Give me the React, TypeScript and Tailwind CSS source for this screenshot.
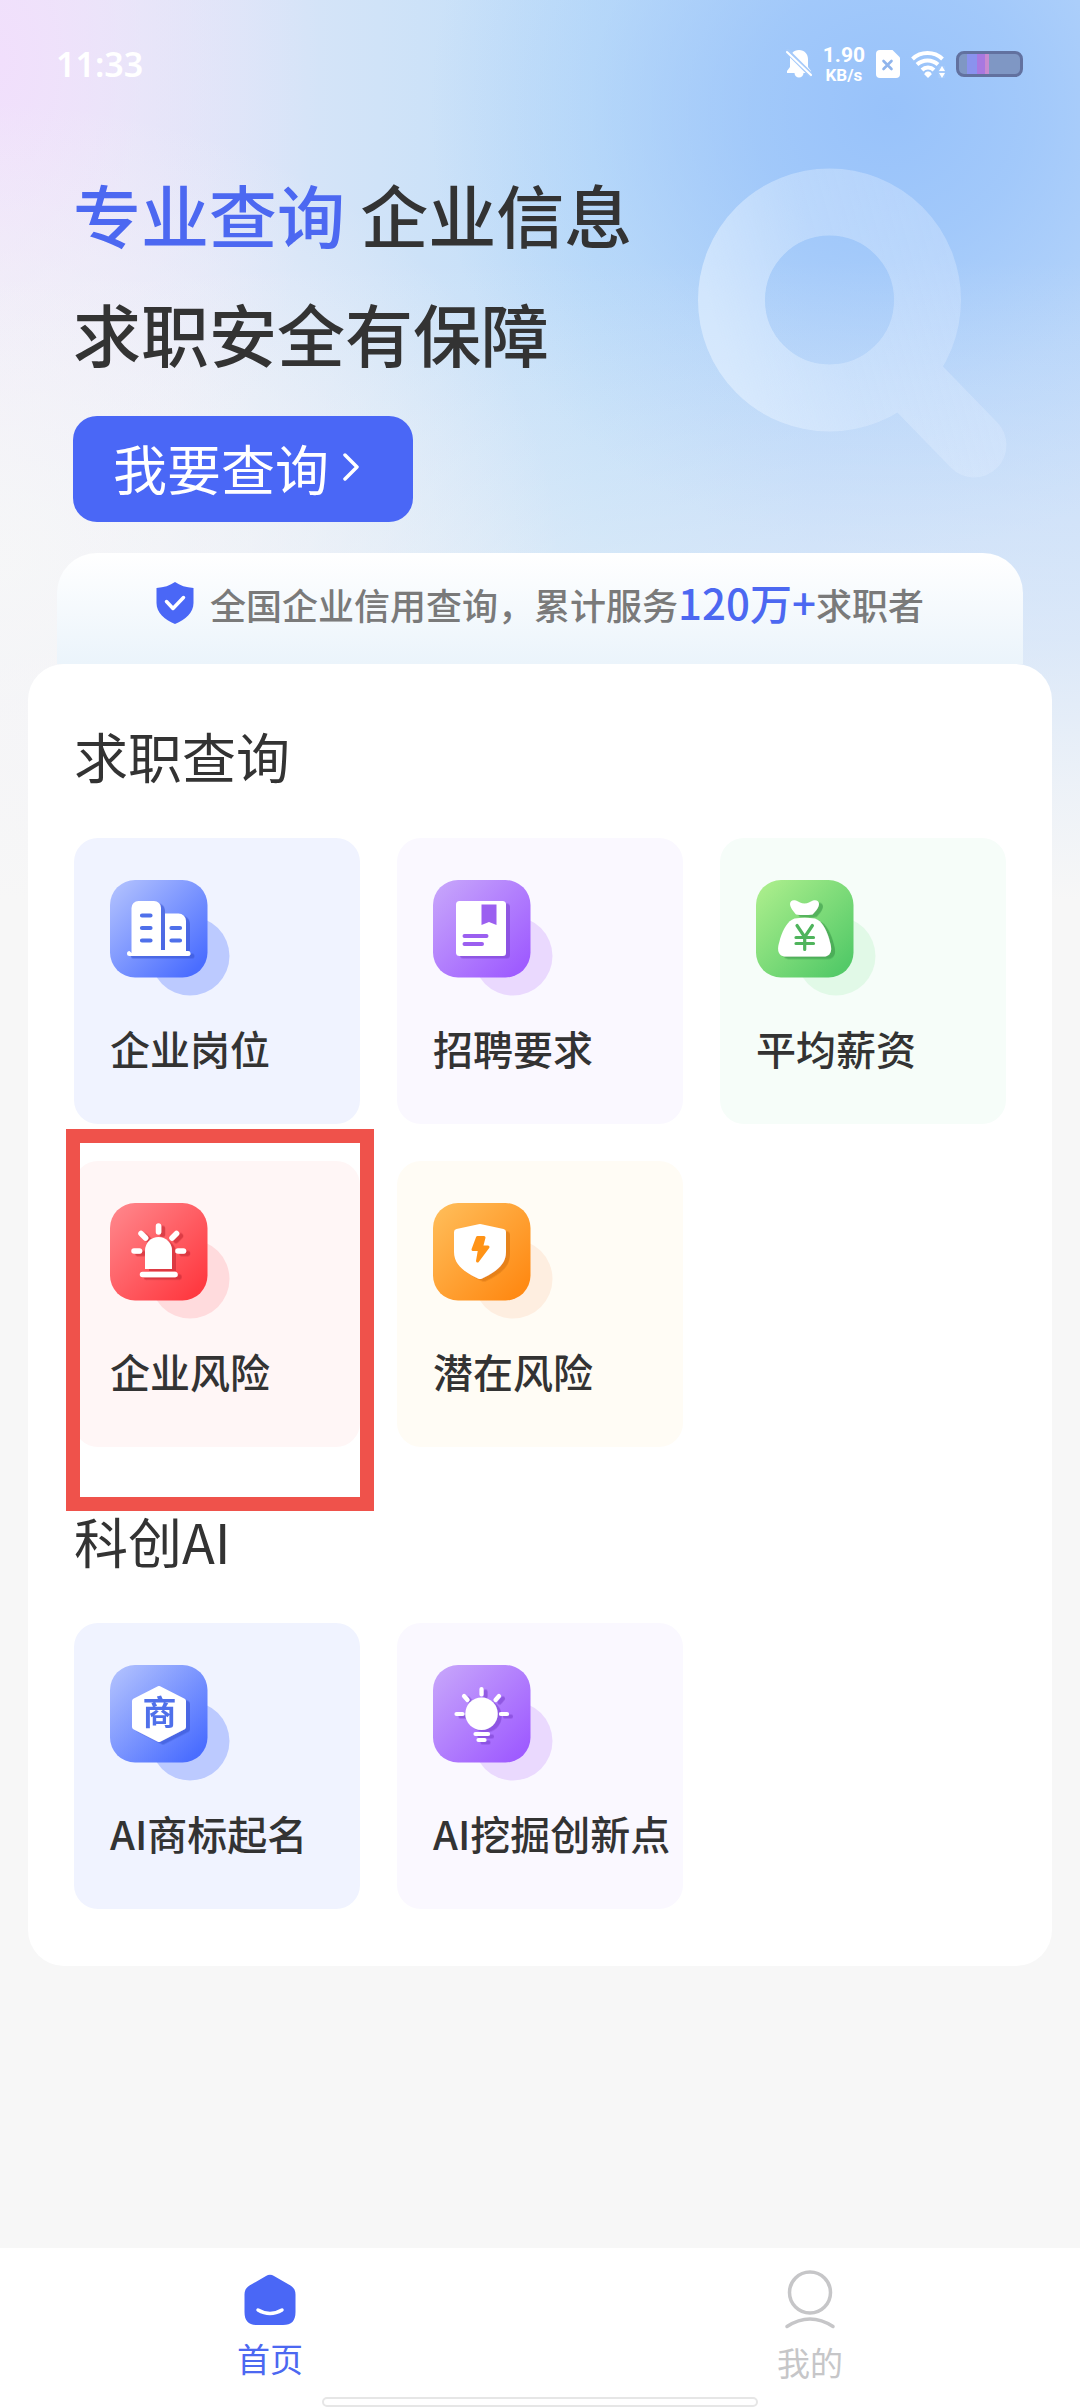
import React, { useId } from "react";

type Tone = "blue" | "purple" | "green" | "red" | "orange";

const tones: Record<Tone, { from: string; to: string; dot: string; ink: string; shade: string; card: string }> = {
  blue: { from: "#b0c0fe", to: "#4a6dff", dot: "#bccaff", ink: "#4f70ea", shade: "#3b58d6", card: "bg-[#f0f3ff]" },
  purple: { from: "#c6a4fb", to: "#9f5cff", dot: "#ead9fe", ink: "#9b5ff0", shade: "#7f45d4", card: "bg-[#faf8ff]" },
  green: { from: "#abee8c", to: "#54ca68", dot: "#e1f9e7", ink: "#4fb45c", shade: "#3c9c4b", card: "bg-[#f6fdf9]" },
  red: { from: "#ff858a", to: "#ff3a41", dot: "#ffdbdd", ink: "#ff444b", shade: "#c92a35", card: "bg-[#fff6f6]" },
  orange: { from: "#ffbc58", to: "#ff8a14", dot: "#feeee0", ink: "#ff9317", shade: "#d9760c", card: "bg-[#fffcf5]" },
};

function Tile({ tone, children }: { tone: Tone; children: (ink: string) => React.ReactNode }) {
  const id = useId();
  const t = tones[tone];
  return (
    <svg width="120" height="116" viewBox="0 0 120 116" aria-hidden="true" className="shrink-0">
      <defs>
        <linearGradient id={`${id}g`} x1="0" y1="0" x2="1" y2="1">
          <stop offset="0.05" stopColor={t.from} />
          <stop offset="0.9" stopColor={t.to} />
        </linearGradient>
        <filter id={`${id}s`} x="-20%" y="-20%" width="150%" height="150%">
          <feDropShadow dx="4" dy="2.5" stdDeviation="0.6" floodColor={t.shade} floodOpacity="0.65" />
        </filter>
      </defs>
      <circle cx="80" cy="76" r="39.5" fill={t.dot} />
      <rect width="97.5" height="97.5" rx="25" fill={`url(#${id}g)`} />
      <g filter={`url(#${id}s)`}>{children(t.ink)}</g>
    </svg>
  );
}

const BuildingsIcon = () => (
  <Tile tone="blue">
    {(ink) => (
      <>
        <path
          fill="#fff"
          d="M21.500 73V28a7 7 0 0 1 7-7H44a7 7 0 0 1 7 7v42h4V33.500h13.500a7.500 7.500 0 0 1 7.500 7.500v30h2a2.300 2.300 0 0 1 0 5H19.500a2.300 2.300 0 0 1 0-5z"
        />
        <path d="M32 35.500h8.500M32 48h8.500M32 60.500h8.500M61.500 48H70M61.500 60.500H70" stroke={ink} strokeWidth="4.200" strokeLinecap="round" />
      </>
    )}
  </Tile>
);

const DocumentIcon = () => (
  <Tile tone="purple">
    {(ink) => (
      <>
        <rect x="23" y="21" width="50" height="55" rx="3.500" fill="#fff" />
        <path d="M48.500 24.500h15V45l-7.500-3-7.500 3z" fill={ink} />
        <path d="M31.500 56H53.500M31.500 64H49" stroke={ink} strokeWidth="4" strokeLinecap="round" />
      </>
    )}
  </Tile>
);

const MoneyBagIcon = () => (
  <Tile tone="green">
    {(ink) => (
      <>
        <path
          fill="#fff"
          d="M40 34.500c-2-2.500-6-7-6-10.500s3-4.500 6-3.500 5 3 8.500 3 5.500-2 8.500-3 6 0 6 3.500-4 8-6.500 10.500q-8.500 1.200-16.500 0z"
        />
        <path
          fill="#fff"
          d="M38.500 38.500q10-1.500 20.500 0c7 2.500 11 10.500 14 20l1.700 6.500c1.500 7-1 11.500-7.200 11.500H30c-6.500 0-9-4.500-7.500-11.500l1.700-6.500c3-9.500 7.300-17.500 14.300-20z"
        />
        <path
          d="M41 45.500l7.700 11.500 7.700-11.500M40 57.500h17.500M40 63.500h17.500M48.700 57v12.500"
          stroke={ink}
          strokeWidth="3.200"
          strokeLinecap="round"
          strokeLinejoin="round"
          fill="none"
        />
      </>
    )}
  </Tile>
);

const AlarmIcon = () => (
  <Tile tone="red">
    {() => (
      <>
        <path d="M35 66V47.500a13.500 13.500 0 0 1 27 0V66z" fill="#fff" />
        <path
          d="M32.500 71.500H65M48.500 23v6M24 48h5.500M68 48h5.500M31 30.500l4.500 4.500M66.500 30.500L62 35"
          stroke="#fff"
          strokeWidth="5.500"
          strokeLinecap="round"
        />
      </>
    )}
  </Tile>
);

const BoltShieldIcon = () => (
  <Tile tone="orange">
    {(ink) => (
      <>
        <path
          fill="#fff"
          d="M45.500 21.300q1.500-.6 3 0l22 4.700q2.500.5 2.500 3v20c0 13-11 20.500-24 26.500q-2 1-4 0c-13-6-24-13.500-24-26.500V29q0-2.500 2.500-3z"
        />
        <path
          d="M44.500 34.500h6.500l-2.500 9.500h6.500L44.500 58l2-11.500h-6.500z"
          fill={ink}
          stroke={ink}
          strokeWidth="3"
          strokeLinejoin="round"
        />
      </>
    )}
  </Tile>
);

const TrademarkIcon = () => (
  <Tile tone="blue">
    {(ink) => (
      <>
        <path
          d="M49 23.500L73.500 36v26L49 74.500 24.500 62V36z"
          fill="#fff"
          stroke="#fff"
          strokeWidth="5"
          strokeLinejoin="round"
        />
        <text x="49.500" y="60" textAnchor="middle" fontSize="34" fill={ink} className="font-bold">
          商
        </text>
      </>
    )}
  </Tile>
);

const BulbIcon = () => (
  <Tile tone="purple">
    {() => (
      <>
        <circle cx="48.500" cy="48.700" r="16.200" fill="#fff" />
        <path
          d="M48.500 24v5.500M23.500 49h6M68 49h6M31 31l3.500 4M66 31l-3.500 4M42.500 69H55M45.500 75h6"
          stroke="#fff"
          strokeWidth="4.200"
          strokeLinecap="round"
        />
      </>
    )}
  </Tile>
);

interface Entry {
  label: string;
  tone: Tone;
  Icon: React.FC;
  marked?: boolean;
}

const jobEntries: Entry[] = [
  { label: "企业岗位", tone: "blue", Icon: BuildingsIcon },
  { label: "招聘要求", tone: "purple", Icon: DocumentIcon },
  { label: "平均薪资", tone: "green", Icon: MoneyBagIcon },
  { label: "企业风险", tone: "red", Icon: AlarmIcon, marked: true },
  { label: "潜在风险", tone: "orange", Icon: BoltShieldIcon },
];

const aiEntries: Entry[] = [
  { label: "AI商标起名", tone: "blue", Icon: TrademarkIcon },
  { label: "AI挖掘创新点", tone: "purple", Icon: BulbIcon },
];

function EntryGrid({ entries }: { entries: Entry[] }) {
  return (
    <div className="mt-[42px] grid grid-cols-3 gap-[37px]">
      {entries.map(({ label, tone, Icon, marked }) => (
        <div key={label} className="relative">
          <button
            type="button"
            className={`flex aspect-square w-full flex-col items-start rounded-3xl pt-[42px] pl-9 text-left ${tones[tone].card}`}
          >
            <Icon />
            <span className="mt-[22px] text-[40px] leading-[60px] font-medium whitespace-nowrap">{label}</span>
          </button>
          {marked && (
            <div className="pointer-events-none absolute -top-8 -right-3.5 -bottom-16 -left-2 border-[14px] border-[#ef524b]" />
          )}
        </div>
      ))}
    </div>
  );
}

function StatusBar() {
  return (
    <div className="flex h-32 items-center justify-between pr-[57px] pl-14 text-white">
      <time className="font-['Noto_Sans',sans-serif] text-[34px] font-semibold">11:33</time>
      <div className="flex items-center gap-[11px]">
        <svg width="26" height="30" viewBox="0 0 26 30" aria-hidden="true">
          <path
            fill="currentColor"
            d="M13 1c5.500 0 9 4 9 9v8l3 4v2H17.500a4.500 4.500 0 0 1-9 0H1v-2l3-4v-8c0-5 3.500-9 9-9z"
          />
          <path d="M0 1l26 26" stroke="#a5cafa" strokeWidth="5" />
          <path d="M1 3l24 23" stroke="currentColor" strokeWidth="2" strokeLinecap="round" />
        </svg>
        <div className="flex flex-col items-center font-[Roboto,sans-serif] font-bold">
          <span className="text-[21px] leading-[22px]">1.90</span>
          <span className="text-[17px] leading-[18px]">KB/s</span>
        </div>
        <svg width="24" height="28" viewBox="0 0 24 28" aria-hidden="true">
          <path fill="currentColor" d="M4 0h12.500L24 7.500V24a4 4 0 0 1-4 4H4a4 4 0 0 1-4-4V4a4 4 0 0 1 4-4z" />
          <path d="M7.500 11l8 8M15.500 11l-8 8" stroke="#8fb4ec" strokeWidth="2.600" strokeLinecap="round" />
        </svg>
        <svg width="34" height="28" viewBox="0 0 34 28" aria-hidden="true" fill="none">
          <path d="M1.500 9a22 22 0 0 1 30 0M6 14.500a15.500 15.500 0 0 1 21 0M11 20a8.500 8.500 0 0 1 12 0" stroke="currentColor" strokeWidth="4" />
          <path fill="currentColor" d="M17 21.500c2 0 4 1.500 3.500 3L17 28l-3.500-3.500c-.5-1.500 1.500-3 3.500-3z" />
          <path d="M31 16v12" stroke="#a5cafa" strokeWidth="7" />
          <path fill="currentColor" d="M31 16l3 5h-6zM31 28l3-5h-6z" />
        </svg>
        <div className="flex h-[26px] w-[67px] items-stretch rounded-lg border-[3px] border-[#62719f] bg-[#7f97c4]">
          <span className="ml-2 w-2.5 bg-[#8a92ee]" />
          <span className="w-2 bg-[#a878e0]" />
          <span className="w-1 bg-[#c88ad0]" />
        </div>
      </div>
    </div>
  );
}

function Magnifier() {
  return (
    <svg
      width="312"
      height="312"
      viewBox="697 168 312 312"
      aria-hidden="true"
      className="absolute top-[168px] right-[71px]"
    >
      <defs>
        <linearGradient id="lens" gradientUnits="userSpaceOnUse" x1="720" y1="340" x2="1000" y2="260">
          <stop offset="0" stopColor="#e6f2ff" stopOpacity="0.6" />
          <stop offset="0.4" stopColor="#e0eeff" stopOpacity="0.42" />
          <stop offset="1" stopColor="#e0ecff" stopOpacity="0.34" />
        </linearGradient>
        <mask id="lens-shape" maskUnits="userSpaceOnUse" x="690" y="160" width="330" height="330">
          <circle cx="829.500" cy="300" r="98" fill="none" stroke="#fff" strokeWidth="67" />
          <path d="M910 379l64 66" stroke="#fff" strokeWidth="65" strokeLinecap="round" />
          <circle cx="829.500" cy="300" r="64" fill="#000" />
        </mask>
      </defs>
      <rect x="690" y="160" width="330" height="330" fill="url(#lens)" mask="url(#lens-shape)" />
    </svg>
  );
}

export default function App() {
  return (
    <div
      lang="zh-CN"
      className="flex min-h-screen flex-col bg-[#f7f7f7] bg-[linear-gradient(180deg,rgba(247,247,247,0)_260px,rgba(247,247,247,0.28)_480px,rgba(247,247,247,0.5)_640px,rgba(247,247,247,0.8)_780px,#f7f7f7_900px),radial-gradient(ellipse_460px_440px_at_890px_110px,rgba(150,193,250,0.95)_0%,rgba(152,195,250,0.75)_30%,rgba(160,201,250,0.35)_65%,rgba(180,212,250,0)_100%),radial-gradient(ellipse_560px_460px_at_0px_560px,#f5f6f8_0%,rgba(245,246,248,0.6)_45%,rgba(240,245,248,0)_100%),radial-gradient(ellipse_320px_560px_at_0px_60px,#f1dffc_0%,rgba(240,228,250,0.5)_45%,rgba(238,232,250,0)_100%),linear-gradient(90deg,#ebe8f8_0%,#d0e3f8_35%,#c0def9_55%,#bcd8fa_75%,#bfd9fa_100%)] font-['Noto_Sans_CJK_SC',sans-serif] text-[#333]"
    >
      <header className="relative">
        <StatusBar />
        <Magnifier />
        <div className="px-[73px] pt-[26px]">
          <h1 className="text-[68px] leading-[119px] font-medium">
            <span className="text-[#4c68f1]">专业查询</span> 企业信息
            <br />
            求职安全有保障
          </h1>
          <button
            type="button"
            className="mt-6 flex h-[106px] items-center gap-3.5 rounded-3xl bg-[#4a67f6] pr-[54px] pb-1 pl-10 text-[54px] text-white"
          >
            我要查询
            <svg width="16" height="28" viewBox="0 0 16 28" fill="none" aria-hidden="true">
              <path d="M2 2l12 12L2 26" stroke="currentColor" strokeWidth="3.500" strokeLinecap="round" strokeLinejoin="round" />
            </svg>
          </button>
        </div>
        <p className="mx-[57px] mt-[31px] flex h-[111px] items-center justify-center rounded-t-[40px] bg-linear-to-b from-white to-[#ebf4fb] pb-3 text-[36px] font-medium text-[#7a7a7a]">
          <svg width="38" height="42" viewBox="0 0 38 42" className="mr-4" aria-hidden="true">
            <path fill="#4a67f6" d="M19 0c5 3.500 11 5.500 18.500 6v15c0 10-8 16.500-18.500 21C8.500 37.500.500 31 .500 21V6C8 5.500 14 3.500 19 0z" />
            <path d="M10.500 19.500l6.500 7 10.500-11" stroke="#fff" strokeWidth="3.500" fill="none" strokeLinecap="round" strokeLinejoin="round" />
          </svg>
          <span className="leading-[60px] whitespace-nowrap">
            全国企业信用查询，累计服务
            <strong className="text-[42px] font-medium text-[#4c68f1]">120万+</strong>
            求职者
          </span>
        </p>
      </header>

      <main className="mx-7 rounded-[36px] bg-white px-[46px] pt-[52px] pb-[57px]">
        <section>
          <h2 className="text-[54px] leading-20">求职查询</h2>
          <EntryGrid entries={jobEntries} />
        </section>
        <section className="mt-[54px]">
          <h2 className="text-[54px] leading-20">科创AI</h2>
          <EntryGrid entries={aiEntries} />
        </section>
      </main>

      <nav className="relative mt-auto grid h-40 grid-cols-2 bg-white text-[33px] leading-10">
        <a href="#home" className="flex flex-col items-center gap-3 pt-[26px] text-[#4c68f1]">
          <svg width="52" height="52" viewBox="0 0 52 52" aria-hidden="true">
            <path
              fill="#4a67f6"
              d="M22 2q4-2.500 8 0l16.500 9.500q5 3 5 9V38c0 9-4 13-12.500 13H13C4.500 51 .500 47 .500 38V20.500q0-6 5-9z"
            />
            <path d="M14 36q12 7 24 0" stroke="#fff" strokeWidth="3.500" fill="none" strokeLinecap="round" />
          </svg>
          首页
        </a>
        <a href="#me" className="flex flex-col items-center gap-3 pt-[22px] text-[#c6c6c8]">
          <svg width="52" height="60" viewBox="0 0 52 60" fill="none" stroke="currentColor" strokeWidth="3.500" aria-hidden="true">
            <circle cx="26" cy="22.500" r="20.500" />
            <path d="M3 56.500q23-15 46 0" strokeLinecap="round" />
          </svg>
          我的
        </a>
        <div className="absolute bottom-px left-1/2 h-2.5 w-[436px] -translate-x-1/2 rounded-full border-2 border-[#e6e6e6] bg-white" />
      </nav>
    </div>
  );
}
